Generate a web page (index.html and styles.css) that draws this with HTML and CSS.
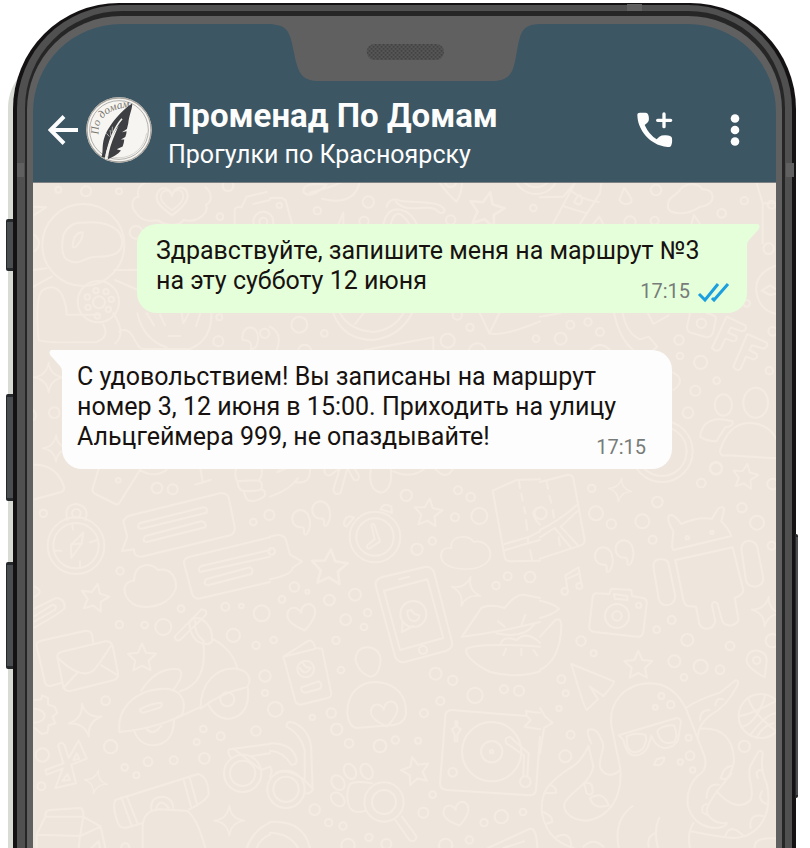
FILE: index.html
```html
<!DOCTYPE html>
<html lang="ru">
<head>
<meta charset="utf-8">
<meta name="viewport" content="width=device-width, initial-scale=1">
<title>Променад По Домам</title>
<link rel="stylesheet" href="styles.css">
</head>
<body>
<div class="phone">
  <span class="side-key key-mute"></span>
  <span class="side-key key-up"></span>
  <span class="side-key key-down"></span>
  <span class="side-key key-power"></span>
  <span class="edge-glow"></span>
  <div class="shell"><div class="band">
    <span class="antenna antenna-top"></span>
    <span class="antenna antenna-left"></span>
    <span class="antenna antenna-right"></span>
    <div class="ring"><div class="glass">
    <main class="screen">
      <svg class="notch" viewBox="-8 72 822 171" aria-hidden="true">
        <defs>
          <pattern id="mesh" width="12" height="12" patternUnits="userSpaceOnUse">
            <rect width="12" height="12" fill="#565656"/>
            <path d="M0 0h5v5H0zM6 6h5v5H6z" fill="#414141"/>
          </pattern>
        </defs>
        <path d="M-8 60V72C35 74 50 82 60 115C72 160 72 182 84 209C94 232 108 240 138 243H672C702 240 718 230 727 206C738 174 737 150 747 115C757 82 770 73 814 72V60Z" fill="#606060"/>
        <rect x="288" y="132" width="232" height="48" rx="24" fill="url(#mesh)"/>
      </svg>
      <header class="topbar">
        <button class="icon-button back" type="button" aria-label="Назад">
          <svg width="32" height="32" viewBox="0 0 32 32"><path d="M30 16H3M16 2.500 2.500 16 16 29.500" fill="none" stroke="#fdfdfd" stroke-width="4"/></svg>
        </button>
        <svg class="avatar" viewBox="137 18 200 200" role="img" aria-label="По домам">
          <defs><path id="arc" d="M176 132C170 82 206 52 280 48"/></defs>
          <circle cx="237" cy="118" r="99" fill="#f7f5f1"/>
          <circle cx="237" cy="118" r="97" fill="none" stroke="#aaa69f" stroke-width="4"/>
          <circle cx="237" cy="118" r="89" fill="none" stroke="#8e8c88" stroke-width="2"/>
          <circle cx="237" cy="118" r="84" fill="none" stroke="#d7d4ce" stroke-width="3" stroke-dasharray="150 400" stroke-dashoffset="-10"/>
          <text class="avatar-text"><textPath href="#arc">По домам</textPath></text>
          <path d="M277 38C248 55 205 104 193 140C184 166 190 184 184 199L194 202C197 189 199 177 205 165C211 145 221 125 236 104C224 132 211 161 206 188L203 207C218 199 234 192 243 180L230 176L248 168Q252 158 253 147L243 147L256 139Q260 130 260 122L246 125L261 115L265 98C268 72 278 53 277 38Z" fill="#3d3f42"/>
          <path d="M199 128l9 10M210 118l2 18M217 108l-1 16" fill="none" stroke="#a9a9a8" stroke-width="3"/>
          <path d="M246 84C227 106 207 143 197 206" fill="none" stroke="#f2f0ec" stroke-width="5"/>
        </svg>
        <div class="contact">
          <h1 class="contact-name">Променад По Домам</h1>
          <p class="contact-note">Прогулки по Красноярску</p>
        </div>
        <button class="icon-button call" type="button" aria-label="Добавить звонок">
          <svg width="36" height="36" viewBox="22 35 108 108">
            <path d="M23 44Q23 37 31 37H47Q56 38 57 48Q60 62 53 67L45 74Q58 103 81 117L89 109Q96 104 109 105Q124 105 127 113Q129 132 122 139Q110 142 90 135C54 122 24 86 23 44Z" fill="#fdfdfd"/>
            <path d="M103 41V79M84 60H123" stroke="#fdfdfd" stroke-width="10" stroke-linecap="round"/>
          </svg>
        </button>
        <button class="icon-button more" type="button" aria-label="Меню">
          <svg width="12" height="34" viewBox="0 0 12 34" fill="#fdfdfd"><circle cx="6" cy="5.500" r="4.300"/><circle cx="6" cy="17" r="4.300"/><circle cx="6" cy="28.500" r="4.300"/></svg>
        </button>
      </header>
      <section class="chat" aria-label="Переписка">
        <svg class="wallpaper" viewBox="33 183 743 665" preserveAspectRatio="xMinYMin slice" aria-hidden="true">
          <defs>
            <path id="star" d="M0-40L12-13 42-10 20 11 26 40 0 26-26 40-20 11-42-10-12-13Z"/>
            <path id="spark" d="M0-50Q4-6 50 0 6 6 0 50-6 6-50 0-6-6 0-50Z"/>
            <path id="heart" d="M0 40C-22 24-50 4-40-20-30-42-6-36 0-14 6-38 34-44 42-20 48 4 20 26 0 40Z"/>
            <path id="quote" d="M20 34C36 6 28-34 0-36-36-34-32 18 2 16Q12 14 10 34Q12 42 20 34Z"/>
            <path id="cloud" d="M-44-28C-40-62 10-66 26-38 54-46 78-22 78 8 78 44 40 66 0 64-46 64-76 44-76 14-76-8-64-18-44-14Z"/>
          </defs>
          <g transform="translate(0 180) scale(.33333)">
            <circle cx="175" cy="29" r="9"/><circle cx="258" cy="34" r="15"/><circle cx="357" cy="34" r="9"/><circle cx="660" cy="110" r="10"/><circle cx="684" cy="17" r="16"/><circle cx="408" cy="157" r="19"/>
            <circle cx="250" cy="195" r="123"/><path d="M190 165Q210 125 250 128C310 122 360 140 366 178Q374 232 290 230C250 230 240 262 200 238Q180 225 190 165ZM218 200Q220 158 248 157Q250 170 236 190Q227 207 218 200Z"/>
            <path d="M408 98C390 80 396 52 416 50 406 22 430 4 450 8M408 98C430 134 470 118 476 122 500 140 540 138 550 120 590 130 628 100 618 74 640 64 634 32 616 22"/>
            <use href="#heart" transform="translate(516 62) scale(1.100)"/><use href="#heart" transform="translate(516 59) scale(.8)"/>
            <path d="M704 132V90Q706 78 724 82L740 50 800 36M760 72L810 60M100 270L140 265M100 320L155 290M342 270H414M345 300L414 330"/><circle cx="790" cy="125" r="30"/><circle cx="790" cy="125" r="12"/>
            <path d="M116 480Q104 350 128 330Q180 300 198 380L200 404H300M116 480Q130 490 290 486Q330 470 310 434"/>
            <circle cx="295" cy="365" r="62"/><circle cx="297" cy="367" r="18"/><circle cx="262" cy="351" r="8"/><circle cx="288" cy="332" r="8"/><circle cx="318" cy="335" r="8"/><circle cx="334" cy="358" r="8"/><circle cx="264" cy="382" r="8"/><circle cx="292" cy="408" r="8"/><circle cx="325" cy="388" r="8"/>
            <path d="M358 455C400 430 405 510 430 507H570Q636 480 634 400M412 400Q430 480 500 502M440 400l22 36M480 404l15 32M545 400l5 30 15-28M600 402l-12 36M506 468h34M346 490Q380 460 340 400"/>
            <circle cx="655" cy="484" r="15"/><path d="M728 480C720 430 780 430 774 480Q770 510 752 508Q760 480 728 480Z"/>
            <circle cx="658" cy="412" r="9"/><circle cx="794" cy="460" r="14"/>
            <use href="#spark" transform="translate(146 592) scale(.9)"/><circle cx="163" cy="698" r="16"/><use href="#spark" transform="translate(168 805) scale(.8)"/><path d="M104 80L138 82 104 104M104 165Q130 190 104 214M100 690Q116 710 100 720"/>
          </g>
          <g transform="translate(270 180) scale(.33333)">
            <path d="M0 54L34 54Q48 56 50 72L66 132M100 36C100 10 130 10 170 14Q120 60 100 36ZM120 38Q190 20 220 4M156 56Q250 80 268 10M206 132L220 98V132"/>
            <circle cx="28" cy="76" r="8"/><circle cx="142" cy="92" r="11"/><circle cx="295" cy="66" r="17"/><circle cx="282" cy="124" r="14"/><circle cx="542" cy="120" r="14"/><circle cx="790" cy="84" r="10"/>
            <path d="M340 132Q350 90 380 88Q420 90 440 132M362 132Q380 70 418 132M350 80Q360 50 390 62C440 70 510 60 524 90Q520 110 494 86C460 76 410 100 378 66M510 10Q540 50 560 65Q575 40 576 10"/><circle cx="542" cy="4" r="17"/>
            <use href="#star" transform="translate(650 86) rotate(12) scale(1.250)"/><circle cx="798" cy="-26" r="68"/><circle cx="798" cy="-26" r="48"/>
            <path d="M190 400Q220 480 310 480Q390 470 426 400M210 400Q240 452 310 456Q370 450 400 400M255 432L280 400M630 400L658 460Q700 470 810 424M658 460L688 400M285 510L490 472V510M0 440Q40 460 20 510"/>
            <circle cx="88" cy="434" r="24"/><circle cx="163" cy="460" r="10"/><circle cx="562" cy="405" r="14"/><circle cx="600" cy="442" r="11"/><circle cx="533" cy="482" r="21"/><circle cx="622" cy="516" r="26"/><circle cx="798" cy="476" r="10"/><circle cx="104" cy="514" r="20"/>
          </g>
          <g transform="translate(540 180) scale(.33333)">
            <path d="M0 52L70 50 104 10M184 10L180 40 120 132M40 130L104 10M90 30Q126 60 176 66M68 78L140 100M102 66Q124 28 126 62Q120 82 102 66ZM238 60L252 24Q282 60 272 68Q252 80 238 60ZM384 80C380 50 410 46 416 34 440 0 480 14 486 28 530 26 530 76 480 80 440 110 380 102 384 80ZM650 10L668 70H710M668 70V190M160 132L178 110 190 132M454 132L462 105 480 132"/>
            <circle cx="348" cy="30" r="16"/><circle cx="613" cy="62" r="11"/><circle cx="545" cy="100" r="13"/><circle cx="344" cy="122" r="12"/><circle cx="270" cy="126" r="17"/><circle cx="695" cy="74" r="12"/><circle cx="686" cy="206" r="16"/>
            <path d="M710 256Q640 280 650 340Q660 392 710 402M665 332L690 316 712 330M665 332L690 345 712 340"/><circle cx="620" cy="370" r="10"/><circle cx="698" cy="454" r="13"/>
            <path d="M222 400Q240 480 280 510M248 400Q260 460 300 478L326 470 352 500 340 510M324 400L340 432 386 406M0 410L60 400M150 510Q180 480 210 510"/>
            <circle cx="91" cy="434" r="12"/><circle cx="144" cy="426" r="11"/><circle cx="180" cy="456" r="12"/><circle cx="62" cy="476" r="18"/><circle cx="417" cy="480" r="14"/><circle cx="420" cy="528" r="10"/><circle cx="482" cy="547" r="20"/><circle cx="530" cy="602" r="10"/><circle cx="466" cy="632" r="15"/><circle cx="688" cy="572" r="11"/><circle cx="444" cy="698" r="16"/><circle cx="528" cy="864" r="18"/>
            <path d="M400 578Q440 600 400 630M450 400L441 440Q440 456 458 460L500 472Q516 470 520 455L528 415Q526 404 500 400"/><circle cx="484" cy="430" r="14"/>
            <path d="M560 410L616 436Q622 452 606 454L572 442 564 458 588 468Q594 482 580 484L556 476 542 506Q530 520 516 504ZM622 462L680 488Q686 500 672 506L636 496 628 510 650 522Q656 534 640 538L618 530 602 566Q590 576 580 560Z"/>
            <ellipse cx="550" cy="675" rx="26" ry="32"/><ellipse cx="647" cy="668" rx="37" ry="45"/>
            <path d="M480 770Q490 700 578 724Q580 740 556 742Q530 780 530 784Q500 784 480 770ZM540 812Q570 720 640 730Q690 736 710 780M540 812Q540 830 560 826L710 835"/>
            <circle cx="366" cy="814" r="92"/><circle cx="366" cy="814" r="74"/>
          </g>
          <g transform="translate(0 460) scale(.33333)">
            <path d="M104 14Q170 14 192 80Q194 92 184 96L104 118M298 20L278 85Q276 96 286 102L346 132Q354 136 360 126L420 30M420 30Q460 56 500 30M600 20L608 64M586 74L632 60M710 20C700 50 712 66 714 64 710 84 730 96 730 92 736 104 736 124 752 122 770 126 786 114 794 108Q798 92 784 88 790 66 776 62 790 48 784 20M714 64Q740 60 776 62M730 92Q760 96 784 88"/>
            <circle cx="355" cy="61" r="7"/><circle cx="471" cy="84" r="16"/><circle cx="518" cy="88" r="15"/><circle cx="130" cy="160" r="11"/><circle cx="760" cy="186" r="10"/><circle cx="360" cy="333" r="11"/><circle cx="808" cy="165" r="15"/>
            <circle cx="228" cy="257" r="85"/><circle cx="228" cy="257" r="68"/><circle cx="229" cy="160" r="13"/><path d="M202 180Q190 134 230 132Q270 140 256 180M213 254L250 218 245 250 214 294ZM213 254L245 250M217 196l2 12M166 272h18M270 247l20-6M240 304v16"/>
            <path d="M370 185Q376 168 396 165L660 100Q680 98 686 112L704 200Q706 220 690 226L424 290Q400 290 402 268L366 273 382 230ZM418 190L610 142Q624 142 620 158L424 206Q408 206 418 190ZM436 228L604 184Q620 186 616 202L440 246Q424 244 436 228ZM810 232L570 290Q550 294 552 310L576 400Q580 416 596 416L810 366M810 270L604 318Q592 326 600 336L810 290M618 358L750 322Q762 328 754 342L624 376Q608 374 618 358Z"/>
            <path d="M402 362C402 310 452 304 474 330 510 322 530 350 528 384 512 430 462 448 414 438 370 426 356 364 402 362Z"/>
            <use href="#star" transform="translate(285 411) rotate(12)"/><use href="#star" transform="translate(426 591)"/>
            <path d="M104 446L168 414Q196 416 194 444Q190 454 104 502M104 468L158 434Q174 438 164 450L104 484M104 380Q134 396 104 410"/>
            <circle cx="358" cy="494" r="11"/><circle cx="434" cy="495" r="10"/><circle cx="490" cy="501" r="24"/><circle cx="543" cy="446" r="10"/><circle cx="676" cy="440" r="12"/><circle cx="724" cy="438" r="7"/><circle cx="785" cy="460" r="24"/><circle cx="700" cy="526" r="20"/><circle cx="768" cy="556" r="11"/><circle cx="795" cy="648" r="17"/><circle cx="795" cy="699" r="9"/><circle cx="317" cy="722" r="13"/>
            <path d="M186 668L152 678Q138 680 134 664L110 558Q108 546 122 542L258 512Q272 512 276 524L280 550M172 592Q170 582 182 576L316 544Q332 542 338 558L354 640Q356 654 342 660L214 692Q196 696 190 680ZM172 592Q240 660 280 632 300 610 336 552M190 684L234 636M304 616L354 646"/>
            <path d="M524 530L604 448Q624 450 618 464L540 540Q526 546 524 530ZM568 490Q580 466 606 478 640 500 636 544 624 560 592 544 570 524 568 490ZM586 482Q580 520 612 544M610 548Q624 670 540 694M636 536Q700 570 712 626M424 692Q470 620 536 628Q558 640 518 692M358 812C352 750 400 690 490 686 540 684 560 720 548 760 530 780 440 810 358 816ZM420 748Q450 730 484 728Q490 742 470 746L430 758Q418 756 420 748ZM404 816Q420 856 462 856 520 850 522 782M440 806Q456 830 484 798M526 776L604 740M602 746C600 670 650 620 710 626 760 636 750 670 740 682Q660 700 602 746ZM626 736Q650 780 690 776 750 766 744 684"/><circle cx="682" cy="718" r="21"/>
            <path d="M104 720L124 718 126 706 144 714V734L164 740 172 758 158 770 166 790 146 796 142 818 126 822 104 804M104 746Q134 750 134 768 132 786 104 788"/>
            <use href="#spark" transform="translate(256 780) rotate(-12)"/><use href="#spark" transform="translate(288 966) rotate(12) scale(.7)"/><use href="#spark" transform="translate(688 1082) scale(.9)"/>
            <circle cx="332" cy="860" r="20"/><circle cx="127" cy="885" r="20"/><circle cx="124" cy="979" r="12"/><circle cx="374" cy="922" r="10"/><circle cx="409" cy="946" r="9"/><circle cx="444" cy="905" r="13"/><circle cx="521" cy="901" r="12"/><circle cx="590" cy="846" r="9"/><circle cx="610" cy="807" r="10"/><circle cx="662" cy="829" r="12"/><circle cx="613" cy="895" r="16"/><circle cx="768" cy="813" r="14"/><circle cx="376" cy="1162" r="12"/>
            <path d="M174 856Q184 840 194 856L206 894 236 842 260 896 214 914 228 970 166 984 188 926 140 944 136 930 190 910ZM230 880L220 900 238 896ZM202 942L188 962 210 960Z"/>
            <path d="M346 1020L594 942Q624 950 626 1000Q624 1020 568 1048M346 1020Q336 1040 354 1090 362 1108 384 1102L426 1090M364 1012L396 1100M380 1008L414 1094M550 956L574 1044M568 950L592 1036M454 1048Q450 1010 490 1010 520 1016 520 1044M468 1046Q480 1012 506 1044M428 1164V1100Q430 1050 480 1048L560 1052Q590 1070 616 1164"/>
            <circle cx="728" cy="940" r="56"/><circle cx="728" cy="940" r="38"/><path d="M692 892Q674 866 700 866L810 852M700 866L784 930M756 888L810 880M784 930L810 920"/>
            <path d="M136 1070Q134 1052 150 1050L240 1044Q250 1044 250 1066M136 1070L250 1070 302 1100 316 1164M136 1070L110 1124V1164M110 1124L240 1128 302 1100M240 1128L236 1164M250 1070L240 1128M274 1164L296 1144 300 1164M740 1164Q760 1110 810 1088M770 1164Q780 1136 810 1124"/>
          </g>
          <g transform="translate(270 460) scale(.33333)">
            <path d="M22 36L60 20M0 110Q60 90 84 54M76 66Q124 76 120 20M164 20Q160 50 180 46L210 24 190 88Q194 110 212 98L232 24 252 60Q270 64 266 46L250 20M304 20Q290 90 334 98Q370 90 362 20M370 34Q430 60 470 20M490 20Q530 70 552 20"/>
            <use href="#quote" transform="translate(92 186)"/><use href="#quote" transform="translate(152 160)"/>
            <circle cx="315" cy="231" r="76"/><circle cx="315" cy="231" r="56"/><path d="M304 194Q312 186 316 204L330 244 298 266Q286 266 294 254L314 238ZM222 190Q226 162 252 172L230 200Q222 200 222 190ZM332 148Q340 126 364 140L366 158Z"/>
            <circle cx="409" cy="106" r="17"/><circle cx="564" cy="91" r="12"/><circle cx="602" cy="111" r="13"/><circle cx="555" cy="172" r="12"/><circle cx="628" cy="168" r="24"/><circle cx="487" cy="243" r="11"/><circle cx="441" cy="268" r="17"/><circle cx="5" cy="274" r="10"/>
            <use href="#star" transform="translate(475 156) rotate(6)"/><use href="#star" transform="translate(179 319) rotate(4) scale(1.280)"/><use href="#star" transform="translate(436 930) rotate(-14)"/>
            <use href="#cloud" transform="translate(586 276) scale(.960 .8)"/>
            <path d="M0 230Q40 216 48 240L60 284 96 304 68 324Q66 344 0 358"/>
            <path d="M318 380Q312 360 334 352L468 320Q484 320 492 336L546 546Q550 562 530 572L404 606Q388 610 376 592ZM342 392L472 358 520 534 390 570ZM388 358L418 350"/><circle cx="459" cy="570" r="12"/><circle cx="430" cy="462" r="39"/><path d="M398 484L396 516 430 498M412 452C410 492 450 490 448 466L434 462 424 450Z"/>
            <circle cx="73" cy="381" r="14"/><circle cx="112" cy="395" r="6"/><circle cx="36" cy="418" r="10"/><circle cx="178" cy="420" r="16"/><circle cx="255" cy="404" r="18"/><circle cx="293" cy="458" r="11"/><circle cx="227" cy="479" r="16"/><circle cx="282" cy="501" r="10"/><circle cx="198" cy="541" r="11"/><circle cx="11" cy="540" r="10"/><circle cx="213" cy="630" r="10"/><circle cx="678" cy="377" r="11"/><circle cx="713" cy="349" r="12"/><circle cx="780" cy="351" r="16"/>
            <use href="#heart" transform="translate(96 472) rotate(-12)"/><use href="#spark" transform="translate(588 394) rotate(18) scale(.9)"/>
            <path d="M668 92L740 60 810 58M668 92L704 290Q706 304 722 304L810 302M704 252L774 232 810 214M706 270L774 250 810 240M746 60L750 84M754 102L758 122M762 142L766 160M768 180L772 210M780 270L786 298M774 232V248M810 142Q770 152 810 194"/>
            <path d="M576 530L634 444Q660 430 704 444 740 396 770 406L810 414M576 530Q670 520 810 486M588 570Q600 546 810 560M588 570Q590 600 660 636 740 656 810 634M680 520Q760 538 792 494M690 556Q700 524 740 540 770 510 810 548M684 484L704 500M766 464L754 496M700 586L708 566M754 586V566M790 570L802 586"/>
            <path d="M40 590L116 542Q130 540 136 564L156 566 184 700Q184 712 174 714L90 734Q76 732 74 716ZM40 590L136 566M94 682L146 664Q160 672 150 686L106 698Q90 694 94 682Z"/><circle cx="107" cy="627" r="25"/><path d="M90 624Q104 650 122 624L106 620 98 608"/>
            <path d="M256 600Q260 560 296 562 330 566 332 602 326 650 300 650 268 640 256 600ZM232 760C230 700 270 664 320 666 380 670 410 710 408 760Q404 794 360 796L260 804Q236 800 232 760Z"/><use href="#heart" transform="translate(344 762) rotate(-10) scale(.950)"/>
            <circle cx="497" cy="641" r="18"/><circle cx="548" cy="661" r="14"/><circle cx="615" cy="706" r="23"/><circle cx="702" cy="688" r="12"/><circle cx="747" cy="692" r="15"/><circle cx="511" cy="723" r="12"/><circle cx="462" cy="760" r="12"/><circle cx="16" cy="748" r="22"/><circle cx="127" cy="772" r="8"/><circle cx="184" cy="759" r="14"/><circle cx="200" cy="808" r="17"/><circle cx="237" cy="850" r="13"/><circle cx="330" cy="858" r="19"/><circle cx="376" cy="840" r="11"/><circle cx="444" cy="842" r="9"/><circle cx="488" cy="1004" r="10"/><circle cx="460" cy="1058" r="15"/>
            <path d="M810 758L788 756 768 752 770 768 544 750Q526 752 526 768L510 970Q510 988 530 990L780 1006Q796 1006 798 990L810 830M770 768L782 780 764 800 810 808M556 784V800L546 808 554 824V844H562V824L572 808 562 800V784ZM708 836Q720 824 730 840L776 880 772 948M708 836Q704 850 716 854L762 886 760 948"/><circle cx="665" cy="875" r="89"/><circle cx="665" cy="875" r="32"/><circle cx="665" cy="875" r="5"/><circle cx="548" cy="937" r="13"/><circle cx="766" cy="965" r="16"/>
            <path d="M50 796Q50 780 76 790Q126 816 124 880L128 990Q120 1002 104 1000M104 958V870Q90 820 50 800M0 850Q70 850 80 900 80 916 64 914 40 874 0 872M0 920Q10 930 0 950M18 938Q70 920 128 986"/><circle cx="48" cy="988" r="56"/><circle cx="48" cy="988" r="38"/>
            <ellipse cx="204" cy="968" rx="18" ry="24" transform="rotate(-35 204 968)"/><ellipse cx="240" cy="934" rx="17" ry="24" transform="rotate(-25 240 934)"/><ellipse cx="290" cy="934" rx="17" ry="24" transform="rotate(-25 290 934)"/><ellipse cx="203" cy="1018" rx="17" ry="24" transform="rotate(-45 203 1018)"/>
            <path d="M306 970Q240 958 236 980C230 1000 230 1020 238 1040Q250 1064 288 1052M376 1080L418 1140Q434 1150 440 1130L396 1070"/><circle cx="342" cy="1026" r="59"/><circle cx="342" cy="1026" r="36"/>
            <use href="#heart" transform="translate(560 1062) rotate(-14) scale(.9)"/><circle cx="134" cy="1049" r="16"/><circle cx="176" cy="1088" r="11"/><circle cx="219" cy="1098" r="11"/><circle cx="297" cy="1132" r="11"/><circle cx="234" cy="1156" r="20"/><circle cx="349" cy="1152" r="15"/><circle cx="694" cy="1070" r="20"/><circle cx="642" cy="1088" r="11"/><circle cx="598" cy="1140" r="11"/><circle cx="527" cy="1156" r="20"/><circle cx="759" cy="1056" r="10"/>
            <path d="M0 1086Q100 1080 120 1164M0 1118Q60 1120 84 1164M654 1164L780 1106Q800 1104 802 1164M700 1164L762 1144"/>
          </g>
          <g transform="translate(540 460) scale(.33333)">
            <circle cx="528" cy="26" r="18"/><circle cx="484" cy="69" r="13"/><circle cx="155" cy="85" r="11"/><circle cx="352" cy="126" r="16"/><circle cx="168" cy="160" r="21"/><circle cx="214" cy="192" r="14"/><circle cx="307" cy="184" r="21"/><circle cx="338" cy="239" r="12"/><circle cx="606" cy="143" r="14"/><circle cx="651" cy="188" r="21"/><circle cx="695" cy="257" r="12"/><circle cx="698" cy="72" r="16"/>
            <use href="#star" transform="translate(616 47) rotate(10) scale(.9)"/><use href="#star" transform="translate(295 613)"/><use href="#spark" transform="translate(240 90) rotate(8) scale(.7)"/><use href="#spark" transform="translate(680 455) rotate(8) scale(.9)"/>
            <path d="M0 66L84 44Q98 44 100 56L134 240Q134 252 122 256L0 296M0 210Q60 180 110 136M112 154L62 200 112 254M44 204L92 262M0 232L44 204M20 66L24 86M28 108L34 128M38 150L42 172M56 232L60 256"/><circle cx="2" cy="160" r="18"/>
            <use href="#quote" transform="translate(190 298)"/><use href="#quote" transform="translate(252 277)"/>
            <path d="M82 386L76 346 116 322 124 372M78 358L118 340"/><circle cx="74" cy="394" r="10"/><circle cx="118" cy="378" r="9"/>
            <path d="M396 260L400 214Q380 180 386 168 398 156 424 192 470 170 516 176L534 146Q552 136 552 150L544 184Q566 206 574 228L400 270ZM406 300L578 262 610 390Q610 404 584 414L594 470Q600 490 576 496 550 498 546 480L532 430Q516 420 516 436L526 484Q520 508 496 506 476 502 476 480L468 440 444 438Q434 436 430 420ZM340 320Q340 298 360 298 384 296 386 314L406 408Q404 434 380 436 360 434 356 416ZM604 266Q606 244 626 242 648 244 652 262L670 354Q670 376 646 380 624 380 618 362Z"/><circle cx="442" cy="233" r="5"/><circle cx="516" cy="217" r="5"/>
            <path d="M158 412Q160 398 174 400L208 402 214 386 274 390 276 408 308 414Q322 416 320 432L310 516Q306 532 292 530L164 516Q146 514 148 498ZM222 402L262 408V420L224 416Z"/><circle cx="231" cy="468" r="36"/><circle cx="231" cy="468" r="14"/><circle cx="296" cy="436" r="8"/>
            <path d="M0 422Q40 430 58 446 40 464 0 474M0 530L46 480Q64 470 64 500 60 600 0 630"/>
            <circle cx="123" cy="543" r="14"/><circle cx="161" cy="580" r="9"/><circle cx="64" cy="658" r="12"/><circle cx="77" cy="700" r="9"/><circle cx="57" cy="745" r="8"/><circle cx="395" cy="480" r="12"/><circle cx="350" cy="509" r="10"/><circle cx="442" cy="540" r="18"/><circle cx="570" cy="558" r="13"/><circle cx="403" cy="604" r="18"/><circle cx="482" cy="620" r="21"/><circle cx="540" cy="629" r="13"/><circle cx="432" cy="652" r="10"/><circle cx="697" cy="542" r="20"/><circle cx="650" cy="601" r="11"/><path d="M674 652Q616 620 620 596 626 570 652 572 682 576 680 606Z"/>
            <path d="M94 612L222 664Q224 670 190 708L150 680 174 718 140 750Q134 748 94 612ZM0 744L16 770 38 788 12 804 0 880"/>
            <path d="M240 920L214 796C206 730 250 672 330 670 390 670 420 710 438 746L494 890Q504 930 474 946 436 984 444 1040C470 1120 560 1110 560 1088 530 1096 500 1070 500 1050 510 1000 580 960 582 900 580 840 550 800 480 806M438 744Q470 720 540 698L588 660Q600 664 590 680 560 740 510 766 470 800 474 836M236 826L410 774Q424 774 422 790L414 840Q400 866 370 864 346 858 334 828L324 860Q310 888 280 886 260 884 250 840ZM260 830Q280 816 316 824 324 840 308 866 280 890 262 860ZM352 812Q370 794 402 796 416 830 402 846 360 860 352 812ZM342 914L350 898 372 892Q376 904 358 916Z"/>
            <circle cx="364" cy="708" r="9"/><circle cx="346" cy="742" r="7"/><circle cx="392" cy="734" r="11"/><circle cx="446" cy="833" r="9"/><circle cx="450" cy="887" r="13"/><circle cx="421" cy="906" r="8"/><circle cx="458" cy="930" r="8"/><circle cx="92" cy="824" r="12"/><circle cx="76" cy="889" r="18"/><circle cx="613" cy="859" r="17"/>
            <path d="M240 920C250 1010 210 1070 140 1082 80 1080 60 1040 80 1020 100 990 150 970 160 920L146 858C140 870 120 910 90 924 20 970 0 1000 6 1060 20 1130 60 1150 100 1164M146 858L160 920M240 930C220 950 190 950 180 920 176 890 200 860 184 840Q170 800 144 810 140 820 154 850M132 970Q160 960 158 998 150 1010 140 1000ZM150 1014Q190 990 206 1036 160 1050 150 1014ZM28 974Q50 980 48 998L12 1000M10 1056Q40 1070 36 1086L18 1092M50 1130Q90 1110 94 1158M130 1160Q160 1130 190 1160M278 1038Q220 1080 236 1164M358 1074Q340 1110 354 1164M344 1120Q320 1130 326 1160"/>
            <path d="M530 994Q590 1060 632 1020C646 990 620 960 630 920L656 874Q670 870 668 884 660 930 680 970C700 1060 660 1130 580 1134 530 1130 480 1120 452 1114M460 1090Q440 1120 450 1164M542 956Q550 920 574 918M542 956Q564 962 574 940M500 1014Q500 970 536 974M488 1058Q482 1036 500 1032M488 1058L504 1066M556 1128Q570 1086 610 1128M632 1104Q626 1060 668 1068M680 1032Q650 1020 666 994M666 930Q642 930 654 954M480 780Q480 750 508 750M526 736Q530 710 550 718M644 1164Q640 1130 710 1136"/>
            <circle cx="662" cy="768" r="66"/><path d="M600 768Q640 760 706 724M626 718Q640 760 704 810M604 802Q650 790 676 706M630 826Q680 760 708 760M650 834Q664 800 700 790"/>
          </g>
        </svg>
        <article class="message outgoing">
          <svg class="tail" viewBox="0 0 14 22" aria-hidden="true"><path d="M0 0H12Q15 2 12 6L3 16Q1 18 1 22H0Z" fill="#e5ffdb"/></svg>
          <p class="message-text">Здравствуйте, запишите меня на маршрут №3 на эту субботу 12 июня
            <span class="message-meta">
              <time datetime="17:15">17:15</time>
              <svg class="checks" width="32" height="20" viewBox="0 0 32 20" role="img" aria-label="Прочитано"><path d="M2 13L8 19 21 3M15 17L17 19 31 3" fill="none" stroke="#1b9fde" stroke-width="3"/></svg>
            </span>
          </p>
        </article>
        <article class="message incoming">
          <svg class="tail" viewBox="0 0 14 22" aria-hidden="true"><path d="M14 0H2Q-1 2 2 6L11 16Q13 18 13 22H14Z" fill="#fdfdfd"/></svg>
          <p class="message-text">С удовольствием! Вы записаны на маршрут номер 3, 12 июня в 15:00. Приходить на улицу Альцгеймера 999, не опаздывайте!
            <span class="message-meta"><time datetime="17:15">17:15</time></span>
          </p>
        </article>
      </section>
    </main>
    </div></div>
  </div></div>
</div>
</body>
</html>
```
FILE: styles.css
```css
* {
  box-sizing: border-box;
}

body {
  margin: 0;
  background: #fff;
  color: #17120f;
  font-family: Roboto, "Noto Sans", sans-serif;
}

h1,
p {
  margin: 0;
}

.phone {
  position: relative;
  display: flex;
  min-height: 100vh;
  padding: 3px 14px 0 13px;
}

.shell,
.band,
.ring,
.glass {
  display: flex;
  flex: 1;
  min-width: 0;
}

.shell {
  position: relative;
  padding: 2px 4px 0;
  border-radius: 106px 106px 0 0;
  background: #151213;
}

.band {
  position: relative;
  padding: 6px 7px 0 8px;
  border-radius: 104px 104px 0 0;
  background: #505050;
}

.ring {
  padding: 5px 3px 0 2px;
  border-radius: 97px 97px 0 0;
  background: #262626;
}

.glass {
  padding: 8px 6px 0;
  border-radius: 94px 94px 0 0;
  background: #606060;
}

.screen {
  position: relative;
  display: flex;
  flex: 1;
  flex-direction: column;
  min-width: 0;
  overflow: hidden;
  border-radius: 88px 88px 0 0;
  background: #3c5664;
}

.edge-glow {
  position: absolute;
  top: 58px;
  bottom: 0;
  left: 8px;
  width: 60px;
  border-radius: 50px 0 0 0;
  background: #d9dcd4;
}

.side-key {
  position: absolute;
  left: 6px;
  width: 7px;
  border: 1px solid #26292b;
  border-width: 3px 0 3px 1px;
  border-radius: 2px 0 0 2px;
  background: #4a4e50;
  z-index: 1;
}

.key-mute {
  top: 219px;
  height: 52px;
}

.key-up {
  top: 394px;
  height: 107px;
}

.key-down {
  top: 562px;
  height: 107px;
}

.key-power {
  top: 534px;
  right: 12px;
  left: auto;
  width: 3px;
  height: 264px;
  border-radius: 0 2px 2px 0;
}

.antenna {
  position: absolute;
  width: 15px;
  height: 7px;
  background: #606060;
}

.antenna-top {
  top: -1px;
  right: 150px;
}

.antenna-left {
  top: 158px;
  left: 0;
  width: 7px;
  height: 14px;
}

.antenna-right {
  top: 158px;
  right: -2px;
  width: 8px;
  height: 14px;
}

.notch {
  position: absolute;
  top: 0;
  left: 50%;
  width: 274px;
  height: 57px;
  overflow: visible;
  transform: translateX(-50%);
}

.topbar {
  display: flex;
  align-items: center;
  padding: 69px 35px 15px 15px;
  border-bottom: 1px solid #7f8284;
  color: #fdfdfd;
}

.icon-button {
  display: flex;
  flex: none;
  padding: 0;
  border: 0;
  background: none;
  cursor: pointer;
}

.avatar {
  flex: none;
  width: 66px;
  height: 66px;
  margin: 0 16px 0 6px;
}

.avatar-text {
  fill: #77756f;
  font: italic 34px "Liberation Serif", serif;
}

.contact {
  flex: 1;
  min-width: 0;
}

.contact-name {
  font-size: 33px;
  font-weight: 700;
  line-height: 46px;
}

.contact-note {
  margin-top: 4px;
  font-size: 25px;
  line-height: 24px;
}

.call {
  margin-right: 56px;
}

.chat {
  position: relative;
  display: flex;
  flex: 1;
  flex-direction: column;
  align-items: flex-start;
  gap: 37px;
  padding: 41px 29px;
  background: #eee6dd;
}

.wallpaper {
  position: absolute;
  top: 0;
  left: 0;
  width: 100%;
  height: 100%;
  fill: none;
  stroke: #f4ece3;
  stroke-width: 6;
  stroke-linejoin: round;
  stroke-linecap: round;
}

.message {
  position: relative;
  max-width: 610px;
  padding: 12px 18px 12px 19px;
  border-radius: 20px;
}

.outgoing {
  align-self: flex-end;
  border-top-right-radius: 0;
  background: #e5ffdb;
}

.incoming {
  padding: 12px 26px 12px 15px;
  border-top-left-radius: 0;
  background: #fdfdfd;
}

.tail {
  position: absolute;
  top: 0;
  width: 14px;
  height: 22px;
}

.outgoing .tail {
  left: 100%;
  margin-left: -1px;
}

.incoming .tail {
  right: 100%;
  margin-right: -1px;
}

.message-text {
  display: flow-root;
  font-size: 25px;
  line-height: 30px;
}

.message-meta {
  display: flex;
  float: right;
  align-items: center;
  gap: 7px;
  margin-top: 15px;
  color: #777c7a;
  font-size: 20px;
  line-height: 20px;
}

.checks {
  overflow: visible;
}
```
